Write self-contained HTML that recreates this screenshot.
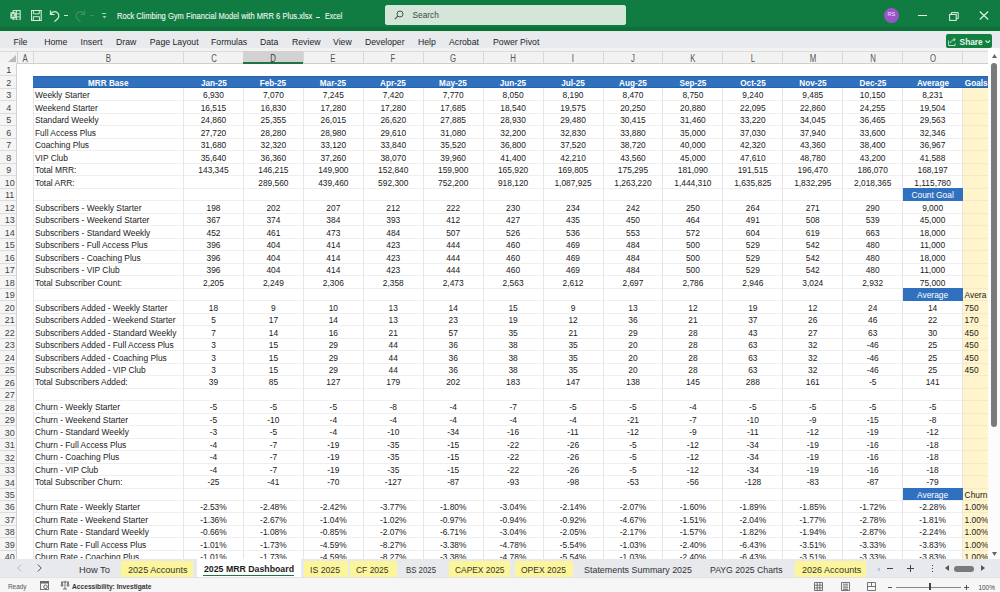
<!DOCTYPE html><html><head><meta charset="utf-8"><style>
*{margin:0;padding:0;box-sizing:border-box}
html,body{width:1000px;height:592px;overflow:hidden;background:#fff;font-family:"Liberation Sans", sans-serif;}
.a{position:absolute}
.t{position:absolute;white-space:nowrap;line-height:1}
.c{position:absolute;white-space:nowrap;font-size:8.4px;color:#1a1a1a;line-height:10px;height:10px;text-align:center}
.l{position:absolute;white-space:nowrap;font-size:8.4px;color:#1a1a1a;line-height:10px;height:10px;text-align:left}
.hd{position:absolute;white-space:nowrap;font-size:8.8px;color:#fff;font-weight:bold;line-height:10px;height:10px;text-align:center;transform:scaleX(0.93)}
.rn{position:absolute;left:1.2px;width:17px;text-align:center;font-size:9px;color:#444;line-height:10px;height:10px}
.ch{position:absolute;top:51.6px;height:13px;text-align:center;font-size:10px;color:#555;line-height:13px;transform:scaleX(0.78)}
</style></head><body>
<div class="a" style="left:0;top:0;width:1000px;height:31px;background:#117c41"></div>
<div class="a" style="left:0;top:27.2px;width:1000px;height:3.6px;background:#0f6f3a"></div>
<div class="a" style="left:0;top:31px;width:1000px;height:1.2px;background:#dcefe3"></div>
<svg class="a" style="left:10.2px;top:9.7px" width="10.8" height="10.8" viewBox="0 0 12 12"><rect x="3.5" y="0.7" width="7.8" height="10.6" fill="none" stroke="#d9f0df" stroke-width="1.2"/><path d="M7.3 1v10M3.5 4.3h7.8M3.5 7.7h7.8" stroke="#d9f0df" stroke-width="1"/><rect x="0.5" y="2.5" width="6" height="7" fill="#d9f0df"/><path d="M2 4l3 4M5 4l-3 4" stroke="#1d7b43" stroke-width="1"/></svg>
<svg class="a" style="left:30.8px;top:9.7px" width="10.8" height="11.1" viewBox="0 0 11 12" preserveAspectRatio="none"><path d="M0.6 0.6h9.8v10.8h-9.8z" fill="none" stroke="#d9f0df" stroke-width="1.1"/><path d="M2.6 0.6v3.6h5.8v-3.6M2.4 11.4v-4.2h6.2v4.2" fill="none" stroke="#d9f0df" stroke-width="1"/></svg>
<svg class="a" style="left:49px;top:9px" width="12" height="13" viewBox="0 0 12 13"><path d="M1.5 1.5v4h4" fill="none" stroke="#d9f0df" stroke-width="1.2"/><path d="M1.8 5.3C3 2.8 5.6 2 7.8 3.2c2.6 1.5 2.6 5 0.6 6.8l-3 2.6" fill="none" stroke="#d9f0df" stroke-width="1.2"/></svg>
<div class="a" style="left:64px;top:14.6px;width:4px;height:1px;background:#cfe7d5"></div>
<svg class="a" style="left:74px;top:9px" width="12" height="13" viewBox="0 0 12 13"><path d="M10.5 1.5v4h-4" fill="none" stroke="#3f9062" stroke-width="1.2"/><path d="M10.2 5.3C9 2.8 6.4 2 4.2 3.2c-2.6 1.5-2.6 5-0.6 6.8l3 2.6" fill="none" stroke="#3f9062" stroke-width="1.2"/></svg>
<div class="a" style="left:89.5px;top:14.6px;width:4px;height:1px;background:#3f9062"></div>
<div class="a" style="left:102px;top:13.2px;width:4px;height:0.9px;background:#9fcfb2"></div>
<svg class="a" style="left:101.5px;top:15.5px" width="5" height="3" viewBox="0 0 5 3"><path d="M0.5 0h4l-2 2.5z" fill="#9fcfb2"/></svg>
<div class="t" style="left:117px;top:13px;font-size:8.2px;color:#eef7f1;-webkit-text-stroke:0.1px #eef7f1;transform:scaleX(0.925);transform-origin:0 0">Rock Climbing Gym Financial Model with MRR 6 Plus.xlsx</div>
<div class="a" style="left:316.4px;top:17px;width:3.6px;height:0.9px;background:#dcefe3"></div>
<div class="t" style="left:324.5px;top:13px;font-size:8.2px;color:#eef7f1;-webkit-text-stroke:0.1px #eef7f1;transform:scaleX(0.87);transform-origin:0 0">Excel</div>
<div class="a" style="left:385.2px;top:5.3px;width:240.4px;height:20px;background:#d5e5da;border:0.8px solid #c9ecd5;border-radius:2px"></div>
<svg class="a" style="left:394.3px;top:9.9px" width="10" height="10" viewBox="0 0 10 10"><circle cx="6" cy="4" r="3" fill="none" stroke="#3b5a45" stroke-width="1"/><path d="M3.8 6.2L0.8 9.2" stroke="#3b5a45" stroke-width="1.1"/></svg>
<div class="t" style="left:412.5px;top:11.2px;font-size:8.3px;color:#3b4a40">Search</div>
<div class="a" style="left:883.5px;top:7.8px;width:15.4px;height:15.4px;border-radius:50%;background:#9b55c9"></div>
<div class="t" style="left:886.5px;top:12.3px;font-size:5.5px;color:#f0e0ff;width:9.5px;text-align:center">RS</div>
<div class="a" style="left:918px;top:14.6px;width:8.5px;height:1px;background:#e6f2ea"></div>
<svg class="a" style="left:949px;top:11.5px" width="10" height="9" viewBox="0 0 10 9"><rect x="0.6" y="2.4" width="6.6" height="6" fill="none" stroke="#e6f2ea" stroke-width="1"/><path d="M2.4 2.4V0.6h6.8v6h-2" fill="none" stroke="#e6f2ea" stroke-width="1"/></svg>
<svg class="a" style="left:979px;top:11px" width="10" height="9" viewBox="0 0 10 9"><path d="M0.8 0.5l8.4 8M9.2 0.5l-8.4 8" stroke="#e6f2ea" stroke-width="1.1"/></svg>
<div class="a" style="left:0;top:32.2px;width:1000px;height:15.8px;background:#e8eaee"></div>
<div class="t" style="left:13.4px;top:37.8px;font-size:8.7px;color:#262626">File</div>
<div class="t" style="left:44.2px;top:37.8px;font-size:8.7px;color:#262626">Home</div>
<div class="t" style="left:80.6px;top:37.8px;font-size:8.7px;color:#262626">Insert</div>
<div class="t" style="left:116px;top:37.8px;font-size:8.7px;color:#262626">Draw</div>
<div class="t" style="left:149.8px;top:37.8px;font-size:8.7px;color:#262626">Page Layout</div>
<div class="t" style="left:211px;top:37.8px;font-size:8.7px;color:#262626">Formulas</div>
<div class="t" style="left:260px;top:37.8px;font-size:8.7px;color:#262626">Data</div>
<div class="t" style="left:292px;top:37.8px;font-size:8.7px;color:#262626">Review</div>
<div class="t" style="left:333px;top:37.8px;font-size:8.7px;color:#262626">View</div>
<div class="t" style="left:365px;top:37.8px;font-size:8.7px;color:#262626">Developer</div>
<div class="t" style="left:418px;top:37.8px;font-size:8.7px;color:#262626">Help</div>
<div class="t" style="left:449px;top:37.8px;font-size:8.7px;color:#262626">Acrobat</div>
<div class="t" style="left:493px;top:37.8px;font-size:8.7px;color:#262626">Power Pivot</div>
<div class="a" style="left:946px;top:33.6px;width:46.3px;height:14.7px;background:#12803f;border-radius:2px"></div>
<svg class="a" style="left:947.5px;top:37px" width="9" height="9" viewBox="0 0 9 9"><path d="M0.6 3.5v5h6.5v-2" fill="none" stroke="#cfe9d8" stroke-width="0.9"/><path d="M2.5 6C3 3.5 4.5 2.6 7 2.6M5.5 1l1.8 1.6-1.8 1.6" fill="none" stroke="#cfe9d8" stroke-width="0.9"/></svg>
<div class="t" style="left:959.6px;top:37.7px;font-size:8.3px;color:#e8f5ec;font-weight:bold">Share</div>
<svg class="a" style="left:985px;top:39.8px" width="5.5" height="3.5" viewBox="0 0 5.5 3.5"><path d="M0.5 0.5l2.25 2.4 2.25-2.4" fill="none" stroke="#cfe9d8" stroke-width="1.3"/></svg>
<div class="a" style="left:0;top:48px;width:988px;height:15.650000000000002px;background:#f2f2f2;border-bottom:1px solid #cfcfcf"></div>
<div class="a" style="left:0;top:51px;width:988px;height:1px;background:#dcdcdc"></div>
<svg class="a" style="left:8px;top:54.5px" width="8" height="7" viewBox="0 0 8 7"><path d="M8 0v7h-8z" fill="#b9b9b9"/></svg>
<div class="a" style="left:32.5px;top:52px;width:1px;height:11px;background:#d8d8d8"></div>
<div class="ch" style="left:17px;width:16px;color:#555">A</div>
<div class="a" style="left:183.0px;top:52px;width:1px;height:11px;background:#d8d8d8"></div>
<div class="ch" style="left:33px;width:150.5px;color:#555">B</div>
<div class="a" style="left:242.93px;top:52px;width:1px;height:11px;background:#d8d8d8"></div>
<div class="ch" style="left:183.5px;width:59.93000000000001px;color:#555">C</div>
<div class="a" style="left:243.43px;top:50.6px;width:59.93000000000001px;height:13px;background:#d2d2d2;border-bottom:2px solid #217346"></div>
<div class="a" style="left:302.86px;top:52px;width:1px;height:11px;background:#d8d8d8"></div>
<div class="ch" style="left:243.43px;width:59.93000000000001px;color:#333">D</div>
<div class="a" style="left:362.78999999999996px;top:52px;width:1px;height:11px;background:#d8d8d8"></div>
<div class="ch" style="left:303.36px;width:59.92999999999995px;color:#555">E</div>
<div class="a" style="left:422.72px;top:52px;width:1px;height:11px;background:#d8d8d8"></div>
<div class="ch" style="left:363.28999999999996px;width:59.930000000000064px;color:#555">F</div>
<div class="a" style="left:482.65px;top:52px;width:1px;height:11px;background:#d8d8d8"></div>
<div class="ch" style="left:423.22px;width:59.92999999999995px;color:#555">G</div>
<div class="a" style="left:542.5799999999999px;top:52px;width:1px;height:11px;background:#d8d8d8"></div>
<div class="ch" style="left:483.15px;width:59.92999999999995px;color:#555">H</div>
<div class="a" style="left:602.51px;top:52px;width:1px;height:11px;background:#d8d8d8"></div>
<div class="ch" style="left:543.0799999999999px;width:59.930000000000064px;color:#555">I</div>
<div class="a" style="left:662.44px;top:52px;width:1px;height:11px;background:#d8d8d8"></div>
<div class="ch" style="left:603.01px;width:59.930000000000064px;color:#555">J</div>
<div class="a" style="left:722.37px;top:52px;width:1px;height:11px;background:#d8d8d8"></div>
<div class="ch" style="left:662.94px;width:59.92999999999995px;color:#555">K</div>
<div class="a" style="left:782.3px;top:52px;width:1px;height:11px;background:#d8d8d8"></div>
<div class="ch" style="left:722.87px;width:59.92999999999995px;color:#555">L</div>
<div class="a" style="left:842.23px;top:52px;width:1px;height:11px;background:#d8d8d8"></div>
<div class="ch" style="left:782.8px;width:59.930000000000064px;color:#555">M</div>
<div class="a" style="left:902.16px;top:52px;width:1px;height:11px;background:#d8d8d8"></div>
<div class="ch" style="left:842.73px;width:59.92999999999995px;color:#555">N</div>
<div class="a" style="left:962.09px;top:52px;width:1px;height:11px;background:#d8d8d8"></div>
<div class="ch" style="left:902.66px;width:59.930000000000064px;color:#555">O</div>
<div class="a" style="left:1022.02px;top:52px;width:1px;height:11px;background:#d8d8d8"></div>
<div class="a" style="left:16.5px;top:50.6px;width:1px;height:13px;background:#cfcfcf"></div>
<div class="a" style="left:0;top:63.35px;width:987.5px;height:495.65px;overflow:hidden">
<div class="a" style="left:0;top:0;width:17px;height:600px;background:#f5f5f5;border-right:1px solid #cfcfcf"></div>
<div class="a" style="left:962.59px;top:24.979999999999997px;width:25.409999999999968px;height:600px;background:#fff4cb"></div>
<div class="a" style="left:0;top:11.99px;width:17px;height:1px;background:#dcdcdc"></div>
<div class="a" style="left:0;top:24.48px;width:17px;height:1px;background:#dcdcdc"></div>
<div class="a" style="left:33px;top:36.97px;width:929.59px;height:1px;background:#efefef"></div>
<div class="a" style="left:962.59px;top:36.97px;width:25.409999999999968px;height:1px;background:#f4eacb"></div>
<div class="a" style="left:0;top:36.97px;width:17px;height:1px;background:#dcdcdc"></div>
<div class="a" style="left:33px;top:49.46px;width:929.59px;height:1px;background:#efefef"></div>
<div class="a" style="left:962.59px;top:49.46px;width:25.409999999999968px;height:1px;background:#f4eacb"></div>
<div class="a" style="left:0;top:49.46px;width:17px;height:1px;background:#dcdcdc"></div>
<div class="a" style="left:33px;top:61.95px;width:929.59px;height:1px;background:#efefef"></div>
<div class="a" style="left:962.59px;top:61.95px;width:25.409999999999968px;height:1px;background:#f4eacb"></div>
<div class="a" style="left:0;top:61.95px;width:17px;height:1px;background:#dcdcdc"></div>
<div class="a" style="left:33px;top:74.44px;width:929.59px;height:1px;background:#efefef"></div>
<div class="a" style="left:962.59px;top:74.44px;width:25.409999999999968px;height:1px;background:#f4eacb"></div>
<div class="a" style="left:0;top:74.44px;width:17px;height:1px;background:#dcdcdc"></div>
<div class="a" style="left:33px;top:86.93px;width:929.59px;height:1px;background:#efefef"></div>
<div class="a" style="left:962.59px;top:86.93px;width:25.409999999999968px;height:1px;background:#f4eacb"></div>
<div class="a" style="left:0;top:86.93px;width:17px;height:1px;background:#dcdcdc"></div>
<div class="a" style="left:33px;top:99.42px;width:929.59px;height:1px;background:#efefef"></div>
<div class="a" style="left:962.59px;top:99.42px;width:25.409999999999968px;height:1px;background:#f4eacb"></div>
<div class="a" style="left:0;top:99.42px;width:17px;height:1px;background:#dcdcdc"></div>
<div class="a" style="left:33px;top:111.91px;width:929.59px;height:1px;background:#efefef"></div>
<div class="a" style="left:962.59px;top:111.91px;width:25.409999999999968px;height:1px;background:#f4eacb"></div>
<div class="a" style="left:0;top:111.91px;width:17px;height:1px;background:#dcdcdc"></div>
<div class="a" style="left:33px;top:124.40px;width:929.59px;height:1px;background:#efefef"></div>
<div class="a" style="left:962.59px;top:124.40px;width:25.409999999999968px;height:1px;background:#f4eacb"></div>
<div class="a" style="left:0;top:124.40px;width:17px;height:1px;background:#dcdcdc"></div>
<div class="a" style="left:33px;top:136.89px;width:929.59px;height:1px;background:#efefef"></div>
<div class="a" style="left:962.59px;top:136.89px;width:25.409999999999968px;height:1px;background:#f4eacb"></div>
<div class="a" style="left:0;top:136.89px;width:17px;height:1px;background:#dcdcdc"></div>
<div class="a" style="left:33px;top:149.38px;width:929.59px;height:1px;background:#efefef"></div>
<div class="a" style="left:962.59px;top:149.38px;width:25.409999999999968px;height:1px;background:#f4eacb"></div>
<div class="a" style="left:0;top:149.38px;width:17px;height:1px;background:#dcdcdc"></div>
<div class="a" style="left:33px;top:161.87px;width:929.59px;height:1px;background:#efefef"></div>
<div class="a" style="left:962.59px;top:161.87px;width:25.409999999999968px;height:1px;background:#f4eacb"></div>
<div class="a" style="left:0;top:161.87px;width:17px;height:1px;background:#dcdcdc"></div>
<div class="a" style="left:33px;top:174.36px;width:929.59px;height:1px;background:#efefef"></div>
<div class="a" style="left:962.59px;top:174.36px;width:25.409999999999968px;height:1px;background:#f4eacb"></div>
<div class="a" style="left:0;top:174.36px;width:17px;height:1px;background:#dcdcdc"></div>
<div class="a" style="left:33px;top:186.85px;width:929.59px;height:1px;background:#efefef"></div>
<div class="a" style="left:962.59px;top:186.85px;width:25.409999999999968px;height:1px;background:#f4eacb"></div>
<div class="a" style="left:0;top:186.85px;width:17px;height:1px;background:#dcdcdc"></div>
<div class="a" style="left:33px;top:199.34px;width:929.59px;height:1px;background:#efefef"></div>
<div class="a" style="left:962.59px;top:199.34px;width:25.409999999999968px;height:1px;background:#f4eacb"></div>
<div class="a" style="left:0;top:199.34px;width:17px;height:1px;background:#dcdcdc"></div>
<div class="a" style="left:33px;top:211.83px;width:929.59px;height:1px;background:#efefef"></div>
<div class="a" style="left:962.59px;top:211.83px;width:25.409999999999968px;height:1px;background:#f4eacb"></div>
<div class="a" style="left:0;top:211.83px;width:17px;height:1px;background:#dcdcdc"></div>
<div class="a" style="left:33px;top:224.32px;width:929.59px;height:1px;background:#efefef"></div>
<div class="a" style="left:962.59px;top:224.32px;width:25.409999999999968px;height:1px;background:#f4eacb"></div>
<div class="a" style="left:0;top:224.32px;width:17px;height:1px;background:#dcdcdc"></div>
<div class="a" style="left:33px;top:236.81px;width:929.59px;height:1px;background:#efefef"></div>
<div class="a" style="left:962.59px;top:236.81px;width:25.409999999999968px;height:1px;background:#f4eacb"></div>
<div class="a" style="left:0;top:236.81px;width:17px;height:1px;background:#dcdcdc"></div>
<div class="a" style="left:33px;top:249.30px;width:929.59px;height:1px;background:#efefef"></div>
<div class="a" style="left:962.59px;top:249.30px;width:25.409999999999968px;height:1px;background:#f4eacb"></div>
<div class="a" style="left:0;top:249.30px;width:17px;height:1px;background:#dcdcdc"></div>
<div class="a" style="left:33px;top:261.79px;width:929.59px;height:1px;background:#efefef"></div>
<div class="a" style="left:962.59px;top:261.79px;width:25.409999999999968px;height:1px;background:#f4eacb"></div>
<div class="a" style="left:0;top:261.79px;width:17px;height:1px;background:#dcdcdc"></div>
<div class="a" style="left:33px;top:274.28px;width:929.59px;height:1px;background:#efefef"></div>
<div class="a" style="left:962.59px;top:274.28px;width:25.409999999999968px;height:1px;background:#f4eacb"></div>
<div class="a" style="left:0;top:274.28px;width:17px;height:1px;background:#dcdcdc"></div>
<div class="a" style="left:33px;top:286.77px;width:929.59px;height:1px;background:#efefef"></div>
<div class="a" style="left:962.59px;top:286.77px;width:25.409999999999968px;height:1px;background:#f4eacb"></div>
<div class="a" style="left:0;top:286.77px;width:17px;height:1px;background:#dcdcdc"></div>
<div class="a" style="left:33px;top:299.26px;width:929.59px;height:1px;background:#efefef"></div>
<div class="a" style="left:962.59px;top:299.26px;width:25.409999999999968px;height:1px;background:#f4eacb"></div>
<div class="a" style="left:0;top:299.26px;width:17px;height:1px;background:#dcdcdc"></div>
<div class="a" style="left:33px;top:311.75px;width:929.59px;height:1px;background:#efefef"></div>
<div class="a" style="left:962.59px;top:311.75px;width:25.409999999999968px;height:1px;background:#f4eacb"></div>
<div class="a" style="left:0;top:311.75px;width:17px;height:1px;background:#dcdcdc"></div>
<div class="a" style="left:33px;top:324.24px;width:929.59px;height:1px;background:#efefef"></div>
<div class="a" style="left:962.59px;top:324.24px;width:25.409999999999968px;height:1px;background:#f4eacb"></div>
<div class="a" style="left:0;top:324.24px;width:17px;height:1px;background:#dcdcdc"></div>
<div class="a" style="left:33px;top:336.73px;width:929.59px;height:1px;background:#efefef"></div>
<div class="a" style="left:962.59px;top:336.73px;width:25.409999999999968px;height:1px;background:#f4eacb"></div>
<div class="a" style="left:0;top:336.73px;width:17px;height:1px;background:#dcdcdc"></div>
<div class="a" style="left:33px;top:349.22px;width:929.59px;height:1px;background:#efefef"></div>
<div class="a" style="left:962.59px;top:349.22px;width:25.409999999999968px;height:1px;background:#f4eacb"></div>
<div class="a" style="left:0;top:349.22px;width:17px;height:1px;background:#dcdcdc"></div>
<div class="a" style="left:33px;top:361.71px;width:929.59px;height:1px;background:#efefef"></div>
<div class="a" style="left:962.59px;top:361.71px;width:25.409999999999968px;height:1px;background:#f4eacb"></div>
<div class="a" style="left:0;top:361.71px;width:17px;height:1px;background:#dcdcdc"></div>
<div class="a" style="left:33px;top:374.20px;width:929.59px;height:1px;background:#efefef"></div>
<div class="a" style="left:962.59px;top:374.20px;width:25.409999999999968px;height:1px;background:#f4eacb"></div>
<div class="a" style="left:0;top:374.20px;width:17px;height:1px;background:#dcdcdc"></div>
<div class="a" style="left:33px;top:386.69px;width:929.59px;height:1px;background:#efefef"></div>
<div class="a" style="left:962.59px;top:386.69px;width:25.409999999999968px;height:1px;background:#f4eacb"></div>
<div class="a" style="left:0;top:386.69px;width:17px;height:1px;background:#dcdcdc"></div>
<div class="a" style="left:33px;top:399.18px;width:929.59px;height:1px;background:#efefef"></div>
<div class="a" style="left:962.59px;top:399.18px;width:25.409999999999968px;height:1px;background:#f4eacb"></div>
<div class="a" style="left:0;top:399.18px;width:17px;height:1px;background:#dcdcdc"></div>
<div class="a" style="left:33px;top:411.67px;width:929.59px;height:1px;background:#efefef"></div>
<div class="a" style="left:962.59px;top:411.67px;width:25.409999999999968px;height:1px;background:#f4eacb"></div>
<div class="a" style="left:0;top:411.67px;width:17px;height:1px;background:#dcdcdc"></div>
<div class="a" style="left:33px;top:424.16px;width:929.59px;height:1px;background:#efefef"></div>
<div class="a" style="left:962.59px;top:424.16px;width:25.409999999999968px;height:1px;background:#f4eacb"></div>
<div class="a" style="left:0;top:424.16px;width:17px;height:1px;background:#dcdcdc"></div>
<div class="a" style="left:33px;top:436.65px;width:929.59px;height:1px;background:#efefef"></div>
<div class="a" style="left:962.59px;top:436.65px;width:25.409999999999968px;height:1px;background:#f4eacb"></div>
<div class="a" style="left:0;top:436.65px;width:17px;height:1px;background:#dcdcdc"></div>
<div class="a" style="left:33px;top:449.14px;width:929.59px;height:1px;background:#efefef"></div>
<div class="a" style="left:962.59px;top:449.14px;width:25.409999999999968px;height:1px;background:#f4eacb"></div>
<div class="a" style="left:0;top:449.14px;width:17px;height:1px;background:#dcdcdc"></div>
<div class="a" style="left:33px;top:461.63px;width:929.59px;height:1px;background:#efefef"></div>
<div class="a" style="left:962.59px;top:461.63px;width:25.409999999999968px;height:1px;background:#f4eacb"></div>
<div class="a" style="left:0;top:461.63px;width:17px;height:1px;background:#dcdcdc"></div>
<div class="a" style="left:33px;top:474.12px;width:929.59px;height:1px;background:#efefef"></div>
<div class="a" style="left:962.59px;top:474.12px;width:25.409999999999968px;height:1px;background:#f4eacb"></div>
<div class="a" style="left:0;top:474.12px;width:17px;height:1px;background:#dcdcdc"></div>
<div class="a" style="left:33px;top:486.61px;width:929.59px;height:1px;background:#efefef"></div>
<div class="a" style="left:962.59px;top:486.61px;width:25.409999999999968px;height:1px;background:#f4eacb"></div>
<div class="a" style="left:0;top:486.61px;width:17px;height:1px;background:#dcdcdc"></div>
<div class="a" style="left:33px;top:499.10px;width:929.59px;height:1px;background:#efefef"></div>
<div class="a" style="left:962.59px;top:499.10px;width:25.409999999999968px;height:1px;background:#f4eacb"></div>
<div class="a" style="left:0;top:499.10px;width:17px;height:1px;background:#dcdcdc"></div>
<div class="a" style="left:33px;top:511.59px;width:929.59px;height:1px;background:#efefef"></div>
<div class="a" style="left:962.59px;top:511.59px;width:25.409999999999968px;height:1px;background:#f4eacb"></div>
<div class="a" style="left:0;top:511.59px;width:17px;height:1px;background:#dcdcdc"></div>
<div class="a" style="left:32.50px;top:24.979999999999997px;width:1px;height:600px;background:#e6e6e6"></div>
<div class="a" style="left:183.00px;top:24.979999999999997px;width:1px;height:600px;background:#e6e6e6"></div>
<div class="a" style="left:242.93px;top:24.979999999999997px;width:1px;height:600px;background:#e6e6e6"></div>
<div class="a" style="left:302.86px;top:24.979999999999997px;width:1px;height:600px;background:#e6e6e6"></div>
<div class="a" style="left:362.79px;top:24.979999999999997px;width:1px;height:600px;background:#e6e6e6"></div>
<div class="a" style="left:422.72px;top:24.979999999999997px;width:1px;height:600px;background:#e6e6e6"></div>
<div class="a" style="left:482.65px;top:24.979999999999997px;width:1px;height:600px;background:#e6e6e6"></div>
<div class="a" style="left:542.58px;top:24.979999999999997px;width:1px;height:600px;background:#e6e6e6"></div>
<div class="a" style="left:602.51px;top:24.979999999999997px;width:1px;height:600px;background:#e6e6e6"></div>
<div class="a" style="left:662.44px;top:24.979999999999997px;width:1px;height:600px;background:#e6e6e6"></div>
<div class="a" style="left:722.37px;top:24.979999999999997px;width:1px;height:600px;background:#e6e6e6"></div>
<div class="a" style="left:782.30px;top:24.979999999999997px;width:1px;height:600px;background:#e6e6e6"></div>
<div class="a" style="left:842.23px;top:24.979999999999997px;width:1px;height:600px;background:#e6e6e6"></div>
<div class="a" style="left:902.16px;top:24.979999999999997px;width:1px;height:600px;background:#e6e6e6"></div>
<div class="a" style="left:962.09px;top:24.979999999999997px;width:1px;height:600px;background:#e6e6e6"></div>
<div class="rn" style="top:2.00px;left:0.2px">1</div>
<div class="rn" style="top:14.49px;left:0.2px">2</div>
<div class="rn" style="top:26.98px;left:0.2px">3</div>
<div class="rn" style="top:39.47px;left:0.2px">4</div>
<div class="rn" style="top:51.96px;left:0.2px">5</div>
<div class="rn" style="top:64.45px;left:0.2px">6</div>
<div class="rn" style="top:76.94px;left:0.2px">7</div>
<div class="rn" style="top:89.43px;left:0.2px">8</div>
<div class="rn" style="top:101.92px;left:0.2px">9</div>
<div class="rn" style="top:114.41px;">10</div>
<div class="rn" style="top:126.90px;">11</div>
<div class="rn" style="top:139.39px;">12</div>
<div class="rn" style="top:151.88px;">13</div>
<div class="rn" style="top:164.37px;">14</div>
<div class="rn" style="top:176.86px;">15</div>
<div class="rn" style="top:189.35px;">16</div>
<div class="rn" style="top:201.84px;">17</div>
<div class="rn" style="top:214.33px;">18</div>
<div class="rn" style="top:226.82px;">19</div>
<div class="rn" style="top:239.31px;">20</div>
<div class="rn" style="top:251.80px;">21</div>
<div class="rn" style="top:264.29px;">22</div>
<div class="rn" style="top:276.78px;">23</div>
<div class="rn" style="top:289.27px;">24</div>
<div class="rn" style="top:301.76px;">25</div>
<div class="rn" style="top:314.25px;">26</div>
<div class="rn" style="top:326.74px;">27</div>
<div class="rn" style="top:339.23px;">28</div>
<div class="rn" style="top:351.72px;">29</div>
<div class="rn" style="top:364.21px;">30</div>
<div class="rn" style="top:376.70px;">31</div>
<div class="rn" style="top:389.19px;">32</div>
<div class="rn" style="top:401.68px;">33</div>
<div class="rn" style="top:414.17px;">34</div>
<div class="rn" style="top:426.66px;">35</div>
<div class="rn" style="top:439.15px;">36</div>
<div class="rn" style="top:451.64px;">37</div>
<div class="rn" style="top:464.13px;">38</div>
<div class="rn" style="top:476.62px;">39</div>
<div class="rn" style="top:489.11px;">40</div>
<div class="a" style="left:33px;top:12.490000000000002px;width:955px;height:12.49px;background:#2f70bf;border-top:1px solid #2a62a8;border-bottom:1px solid #2a62a8"></div>
<div class="hd" style="left:33px;width:150.5px;top:14.49px">MRR Base</div>
<div class="hd" style="left:183.5px;width:59.93px;top:14.49px">Jan-25</div>
<div class="hd" style="left:243.43px;width:59.93px;top:14.49px">Feb-25</div>
<div class="hd" style="left:303.36px;width:59.93px;top:14.49px">Mar-25</div>
<div class="hd" style="left:363.28999999999996px;width:59.93px;top:14.49px">Apr-25</div>
<div class="hd" style="left:423.22px;width:59.93px;top:14.49px">May-25</div>
<div class="hd" style="left:483.15px;width:59.93px;top:14.49px">Jun-25</div>
<div class="hd" style="left:543.0799999999999px;width:59.93px;top:14.49px">Jul-25</div>
<div class="hd" style="left:603.01px;width:59.93px;top:14.49px">Aug-25</div>
<div class="hd" style="left:662.94px;width:59.93px;top:14.49px">Sep-25</div>
<div class="hd" style="left:722.87px;width:59.93px;top:14.49px">Oct-25</div>
<div class="hd" style="left:782.8px;width:59.93px;top:14.49px">Nov-25</div>
<div class="hd" style="left:842.73px;width:59.93px;top:14.49px">Dec-25</div>
<div class="hd" style="left:902.66px;width:59.93px;top:14.49px">Average</div>
<div class="hd" style="left:962.59px;width:60px;top:14.49px;text-align:left;padding-left:2px;transform-origin:0 0">Goals</div>
<div class="a" style="left:902.66px;top:124.9px;width:59.93px;height:12.49px;background:#2f70bf"></div>
<div class="c" style="left:902.66px;width:59.93px;top:126.80px;color:#fff">Count Goal</div>
<div class="a" style="left:902.66px;top:224.82000000000002px;width:59.93px;height:12.49px;background:#2f70bf"></div>
<div class="c" style="left:902.66px;width:59.93px;top:226.72px;color:#fff">Average</div>
<div class="l" style="left:964.59px;top:226.72px">Avera</div>
<div class="a" style="left:902.66px;top:424.66px;width:59.93px;height:12.49px;background:#2f70bf"></div>
<div class="c" style="left:902.66px;width:59.93px;top:426.56px;color:#fff">Average</div>
<div class="l" style="left:964.59px;top:426.56px">Churn</div>
<div class="l" style="left:35px;top:26.88px">Weekly Starter</div>
<div class="c" style="left:183.5px;width:59.93px;top:26.88px">6,930</div>
<div class="c" style="left:243.43px;width:59.93px;top:26.88px">7,070</div>
<div class="c" style="left:303.36px;width:59.93px;top:26.88px">7,245</div>
<div class="c" style="left:363.28999999999996px;width:59.93px;top:26.88px">7,420</div>
<div class="c" style="left:423.22px;width:59.93px;top:26.88px">7,770</div>
<div class="c" style="left:483.15px;width:59.93px;top:26.88px">8,050</div>
<div class="c" style="left:543.0799999999999px;width:59.93px;top:26.88px">8,190</div>
<div class="c" style="left:603.01px;width:59.93px;top:26.88px">8,470</div>
<div class="c" style="left:662.94px;width:59.93px;top:26.88px">8,750</div>
<div class="c" style="left:722.87px;width:59.93px;top:26.88px">9,240</div>
<div class="c" style="left:782.8px;width:59.93px;top:26.88px">9,485</div>
<div class="c" style="left:842.73px;width:59.93px;top:26.88px">10,150</div>
<div class="c" style="left:902.66px;width:59.93px;top:26.88px">8,231</div>
<div class="l" style="left:35px;top:39.37px">Weekend Starter</div>
<div class="c" style="left:183.5px;width:59.93px;top:39.37px">16,515</div>
<div class="c" style="left:243.43px;width:59.93px;top:39.37px">16,830</div>
<div class="c" style="left:303.36px;width:59.93px;top:39.37px">17,280</div>
<div class="c" style="left:363.28999999999996px;width:59.93px;top:39.37px">17,280</div>
<div class="c" style="left:423.22px;width:59.93px;top:39.37px">17,685</div>
<div class="c" style="left:483.15px;width:59.93px;top:39.37px">18,540</div>
<div class="c" style="left:543.0799999999999px;width:59.93px;top:39.37px">19,575</div>
<div class="c" style="left:603.01px;width:59.93px;top:39.37px">20,250</div>
<div class="c" style="left:662.94px;width:59.93px;top:39.37px">20,880</div>
<div class="c" style="left:722.87px;width:59.93px;top:39.37px">22,095</div>
<div class="c" style="left:782.8px;width:59.93px;top:39.37px">22,860</div>
<div class="c" style="left:842.73px;width:59.93px;top:39.37px">24,255</div>
<div class="c" style="left:902.66px;width:59.93px;top:39.37px">19,504</div>
<div class="l" style="left:35px;top:51.86px">Standard Weekly</div>
<div class="c" style="left:183.5px;width:59.93px;top:51.86px">24,860</div>
<div class="c" style="left:243.43px;width:59.93px;top:51.86px">25,355</div>
<div class="c" style="left:303.36px;width:59.93px;top:51.86px">26,015</div>
<div class="c" style="left:363.28999999999996px;width:59.93px;top:51.86px">26,620</div>
<div class="c" style="left:423.22px;width:59.93px;top:51.86px">27,885</div>
<div class="c" style="left:483.15px;width:59.93px;top:51.86px">28,930</div>
<div class="c" style="left:543.0799999999999px;width:59.93px;top:51.86px">29,480</div>
<div class="c" style="left:603.01px;width:59.93px;top:51.86px">30,415</div>
<div class="c" style="left:662.94px;width:59.93px;top:51.86px">31,460</div>
<div class="c" style="left:722.87px;width:59.93px;top:51.86px">33,220</div>
<div class="c" style="left:782.8px;width:59.93px;top:51.86px">34,045</div>
<div class="c" style="left:842.73px;width:59.93px;top:51.86px">36,465</div>
<div class="c" style="left:902.66px;width:59.93px;top:51.86px">29,563</div>
<div class="l" style="left:35px;top:64.35px">Full Access Plus</div>
<div class="c" style="left:183.5px;width:59.93px;top:64.35px">27,720</div>
<div class="c" style="left:243.43px;width:59.93px;top:64.35px">28,280</div>
<div class="c" style="left:303.36px;width:59.93px;top:64.35px">28,980</div>
<div class="c" style="left:363.28999999999996px;width:59.93px;top:64.35px">29,610</div>
<div class="c" style="left:423.22px;width:59.93px;top:64.35px">31,080</div>
<div class="c" style="left:483.15px;width:59.93px;top:64.35px">32,200</div>
<div class="c" style="left:543.0799999999999px;width:59.93px;top:64.35px">32,830</div>
<div class="c" style="left:603.01px;width:59.93px;top:64.35px">33,880</div>
<div class="c" style="left:662.94px;width:59.93px;top:64.35px">35,000</div>
<div class="c" style="left:722.87px;width:59.93px;top:64.35px">37,030</div>
<div class="c" style="left:782.8px;width:59.93px;top:64.35px">37,940</div>
<div class="c" style="left:842.73px;width:59.93px;top:64.35px">33,600</div>
<div class="c" style="left:902.66px;width:59.93px;top:64.35px">32,346</div>
<div class="l" style="left:35px;top:76.84px">Coaching Plus</div>
<div class="c" style="left:183.5px;width:59.93px;top:76.84px">31,680</div>
<div class="c" style="left:243.43px;width:59.93px;top:76.84px">32,320</div>
<div class="c" style="left:303.36px;width:59.93px;top:76.84px">33,120</div>
<div class="c" style="left:363.28999999999996px;width:59.93px;top:76.84px">33,840</div>
<div class="c" style="left:423.22px;width:59.93px;top:76.84px">35,520</div>
<div class="c" style="left:483.15px;width:59.93px;top:76.84px">36,800</div>
<div class="c" style="left:543.0799999999999px;width:59.93px;top:76.84px">37,520</div>
<div class="c" style="left:603.01px;width:59.93px;top:76.84px">38,720</div>
<div class="c" style="left:662.94px;width:59.93px;top:76.84px">40,000</div>
<div class="c" style="left:722.87px;width:59.93px;top:76.84px">42,320</div>
<div class="c" style="left:782.8px;width:59.93px;top:76.84px">43,360</div>
<div class="c" style="left:842.73px;width:59.93px;top:76.84px">38,400</div>
<div class="c" style="left:902.66px;width:59.93px;top:76.84px">36,967</div>
<div class="l" style="left:35px;top:89.33px">VIP Club</div>
<div class="c" style="left:183.5px;width:59.93px;top:89.33px">35,640</div>
<div class="c" style="left:243.43px;width:59.93px;top:89.33px">36,360</div>
<div class="c" style="left:303.36px;width:59.93px;top:89.33px">37,260</div>
<div class="c" style="left:363.28999999999996px;width:59.93px;top:89.33px">38,070</div>
<div class="c" style="left:423.22px;width:59.93px;top:89.33px">39,960</div>
<div class="c" style="left:483.15px;width:59.93px;top:89.33px">41,400</div>
<div class="c" style="left:543.0799999999999px;width:59.93px;top:89.33px">42,210</div>
<div class="c" style="left:603.01px;width:59.93px;top:89.33px">43,560</div>
<div class="c" style="left:662.94px;width:59.93px;top:89.33px">45,000</div>
<div class="c" style="left:722.87px;width:59.93px;top:89.33px">47,610</div>
<div class="c" style="left:782.8px;width:59.93px;top:89.33px">48,780</div>
<div class="c" style="left:842.73px;width:59.93px;top:89.33px">43,200</div>
<div class="c" style="left:902.66px;width:59.93px;top:89.33px">41,588</div>
<div class="l" style="left:35px;top:101.82px">Total MRR:</div>
<div class="c" style="left:183.5px;width:59.93px;top:101.82px">143,345</div>
<div class="c" style="left:243.43px;width:59.93px;top:101.82px">146,215</div>
<div class="c" style="left:303.36px;width:59.93px;top:101.82px">149,900</div>
<div class="c" style="left:363.28999999999996px;width:59.93px;top:101.82px">152,840</div>
<div class="c" style="left:423.22px;width:59.93px;top:101.82px">159,900</div>
<div class="c" style="left:483.15px;width:59.93px;top:101.82px">165,920</div>
<div class="c" style="left:543.0799999999999px;width:59.93px;top:101.82px">169,805</div>
<div class="c" style="left:603.01px;width:59.93px;top:101.82px">175,295</div>
<div class="c" style="left:662.94px;width:59.93px;top:101.82px">181,090</div>
<div class="c" style="left:722.87px;width:59.93px;top:101.82px">191,515</div>
<div class="c" style="left:782.8px;width:59.93px;top:101.82px">196,470</div>
<div class="c" style="left:842.73px;width:59.93px;top:101.82px">186,070</div>
<div class="c" style="left:902.66px;width:59.93px;top:101.82px">168,197</div>
<div class="l" style="left:35px;top:114.31px">Total ARR:</div>
<div class="c" style="left:243.43px;width:59.93px;top:114.31px">289,560</div>
<div class="c" style="left:303.36px;width:59.93px;top:114.31px">439,460</div>
<div class="c" style="left:363.28999999999996px;width:59.93px;top:114.31px">592,300</div>
<div class="c" style="left:423.22px;width:59.93px;top:114.31px">752,200</div>
<div class="c" style="left:483.15px;width:59.93px;top:114.31px">918,120</div>
<div class="c" style="left:543.0799999999999px;width:59.93px;top:114.31px">1,087,925</div>
<div class="c" style="left:603.01px;width:59.93px;top:114.31px">1,263,220</div>
<div class="c" style="left:662.94px;width:59.93px;top:114.31px">1,444,310</div>
<div class="c" style="left:722.87px;width:59.93px;top:114.31px">1,635,825</div>
<div class="c" style="left:782.8px;width:59.93px;top:114.31px">1,832,295</div>
<div class="c" style="left:842.73px;width:59.93px;top:114.31px">2,018,365</div>
<div class="c" style="left:902.66px;width:59.93px;top:114.31px">1,115,780</div>
<div class="l" style="left:35px;top:139.29px">Subscribers - Weekly Starter</div>
<div class="c" style="left:183.5px;width:59.93px;top:139.29px">198</div>
<div class="c" style="left:243.43px;width:59.93px;top:139.29px">202</div>
<div class="c" style="left:303.36px;width:59.93px;top:139.29px">207</div>
<div class="c" style="left:363.28999999999996px;width:59.93px;top:139.29px">212</div>
<div class="c" style="left:423.22px;width:59.93px;top:139.29px">222</div>
<div class="c" style="left:483.15px;width:59.93px;top:139.29px">230</div>
<div class="c" style="left:543.0799999999999px;width:59.93px;top:139.29px">234</div>
<div class="c" style="left:603.01px;width:59.93px;top:139.29px">242</div>
<div class="c" style="left:662.94px;width:59.93px;top:139.29px">250</div>
<div class="c" style="left:722.87px;width:59.93px;top:139.29px">264</div>
<div class="c" style="left:782.8px;width:59.93px;top:139.29px">271</div>
<div class="c" style="left:842.73px;width:59.93px;top:139.29px">290</div>
<div class="c" style="left:902.66px;width:59.93px;top:139.29px">9,000</div>
<div class="l" style="left:35px;top:151.78px">Subscribers - Weekend Starter</div>
<div class="c" style="left:183.5px;width:59.93px;top:151.78px">367</div>
<div class="c" style="left:243.43px;width:59.93px;top:151.78px">374</div>
<div class="c" style="left:303.36px;width:59.93px;top:151.78px">384</div>
<div class="c" style="left:363.28999999999996px;width:59.93px;top:151.78px">393</div>
<div class="c" style="left:423.22px;width:59.93px;top:151.78px">412</div>
<div class="c" style="left:483.15px;width:59.93px;top:151.78px">427</div>
<div class="c" style="left:543.0799999999999px;width:59.93px;top:151.78px">435</div>
<div class="c" style="left:603.01px;width:59.93px;top:151.78px">450</div>
<div class="c" style="left:662.94px;width:59.93px;top:151.78px">464</div>
<div class="c" style="left:722.87px;width:59.93px;top:151.78px">491</div>
<div class="c" style="left:782.8px;width:59.93px;top:151.78px">508</div>
<div class="c" style="left:842.73px;width:59.93px;top:151.78px">539</div>
<div class="c" style="left:902.66px;width:59.93px;top:151.78px">45,000</div>
<div class="l" style="left:35px;top:164.27px">Subscribers - Standard Weekly</div>
<div class="c" style="left:183.5px;width:59.93px;top:164.27px">452</div>
<div class="c" style="left:243.43px;width:59.93px;top:164.27px">461</div>
<div class="c" style="left:303.36px;width:59.93px;top:164.27px">473</div>
<div class="c" style="left:363.28999999999996px;width:59.93px;top:164.27px">484</div>
<div class="c" style="left:423.22px;width:59.93px;top:164.27px">507</div>
<div class="c" style="left:483.15px;width:59.93px;top:164.27px">526</div>
<div class="c" style="left:543.0799999999999px;width:59.93px;top:164.27px">536</div>
<div class="c" style="left:603.01px;width:59.93px;top:164.27px">553</div>
<div class="c" style="left:662.94px;width:59.93px;top:164.27px">572</div>
<div class="c" style="left:722.87px;width:59.93px;top:164.27px">604</div>
<div class="c" style="left:782.8px;width:59.93px;top:164.27px">619</div>
<div class="c" style="left:842.73px;width:59.93px;top:164.27px">663</div>
<div class="c" style="left:902.66px;width:59.93px;top:164.27px">18,000</div>
<div class="l" style="left:35px;top:176.76px">Subscribers - Full Access Plus</div>
<div class="c" style="left:183.5px;width:59.93px;top:176.76px">396</div>
<div class="c" style="left:243.43px;width:59.93px;top:176.76px">404</div>
<div class="c" style="left:303.36px;width:59.93px;top:176.76px">414</div>
<div class="c" style="left:363.28999999999996px;width:59.93px;top:176.76px">423</div>
<div class="c" style="left:423.22px;width:59.93px;top:176.76px">444</div>
<div class="c" style="left:483.15px;width:59.93px;top:176.76px">460</div>
<div class="c" style="left:543.0799999999999px;width:59.93px;top:176.76px">469</div>
<div class="c" style="left:603.01px;width:59.93px;top:176.76px">484</div>
<div class="c" style="left:662.94px;width:59.93px;top:176.76px">500</div>
<div class="c" style="left:722.87px;width:59.93px;top:176.76px">529</div>
<div class="c" style="left:782.8px;width:59.93px;top:176.76px">542</div>
<div class="c" style="left:842.73px;width:59.93px;top:176.76px">480</div>
<div class="c" style="left:902.66px;width:59.93px;top:176.76px">11,000</div>
<div class="l" style="left:35px;top:189.25px">Subscribers - Coaching Plus</div>
<div class="c" style="left:183.5px;width:59.93px;top:189.25px">396</div>
<div class="c" style="left:243.43px;width:59.93px;top:189.25px">404</div>
<div class="c" style="left:303.36px;width:59.93px;top:189.25px">414</div>
<div class="c" style="left:363.28999999999996px;width:59.93px;top:189.25px">423</div>
<div class="c" style="left:423.22px;width:59.93px;top:189.25px">444</div>
<div class="c" style="left:483.15px;width:59.93px;top:189.25px">460</div>
<div class="c" style="left:543.0799999999999px;width:59.93px;top:189.25px">469</div>
<div class="c" style="left:603.01px;width:59.93px;top:189.25px">484</div>
<div class="c" style="left:662.94px;width:59.93px;top:189.25px">500</div>
<div class="c" style="left:722.87px;width:59.93px;top:189.25px">529</div>
<div class="c" style="left:782.8px;width:59.93px;top:189.25px">542</div>
<div class="c" style="left:842.73px;width:59.93px;top:189.25px">480</div>
<div class="c" style="left:902.66px;width:59.93px;top:189.25px">18,000</div>
<div class="l" style="left:35px;top:201.74px">Subscribers - VIP Club</div>
<div class="c" style="left:183.5px;width:59.93px;top:201.74px">396</div>
<div class="c" style="left:243.43px;width:59.93px;top:201.74px">404</div>
<div class="c" style="left:303.36px;width:59.93px;top:201.74px">414</div>
<div class="c" style="left:363.28999999999996px;width:59.93px;top:201.74px">423</div>
<div class="c" style="left:423.22px;width:59.93px;top:201.74px">444</div>
<div class="c" style="left:483.15px;width:59.93px;top:201.74px">460</div>
<div class="c" style="left:543.0799999999999px;width:59.93px;top:201.74px">469</div>
<div class="c" style="left:603.01px;width:59.93px;top:201.74px">484</div>
<div class="c" style="left:662.94px;width:59.93px;top:201.74px">500</div>
<div class="c" style="left:722.87px;width:59.93px;top:201.74px">529</div>
<div class="c" style="left:782.8px;width:59.93px;top:201.74px">542</div>
<div class="c" style="left:842.73px;width:59.93px;top:201.74px">480</div>
<div class="c" style="left:902.66px;width:59.93px;top:201.74px">11,000</div>
<div class="l" style="left:35px;top:214.23px">Total Subscriber Count:</div>
<div class="c" style="left:183.5px;width:59.93px;top:214.23px">2,205</div>
<div class="c" style="left:243.43px;width:59.93px;top:214.23px">2,249</div>
<div class="c" style="left:303.36px;width:59.93px;top:214.23px">2,306</div>
<div class="c" style="left:363.28999999999996px;width:59.93px;top:214.23px">2,358</div>
<div class="c" style="left:423.22px;width:59.93px;top:214.23px">2,473</div>
<div class="c" style="left:483.15px;width:59.93px;top:214.23px">2,563</div>
<div class="c" style="left:543.0799999999999px;width:59.93px;top:214.23px">2,612</div>
<div class="c" style="left:603.01px;width:59.93px;top:214.23px">2,697</div>
<div class="c" style="left:662.94px;width:59.93px;top:214.23px">2,786</div>
<div class="c" style="left:722.87px;width:59.93px;top:214.23px">2,946</div>
<div class="c" style="left:782.8px;width:59.93px;top:214.23px">3,024</div>
<div class="c" style="left:842.73px;width:59.93px;top:214.23px">2,932</div>
<div class="c" style="left:902.66px;width:59.93px;top:214.23px">75,000</div>
<div class="l" style="left:35px;top:239.21px">Subscribers Added - Weekly Starter</div>
<div class="c" style="left:183.5px;width:59.93px;top:239.21px">18</div>
<div class="c" style="left:243.43px;width:59.93px;top:239.21px">9</div>
<div class="c" style="left:303.36px;width:59.93px;top:239.21px">10</div>
<div class="c" style="left:363.28999999999996px;width:59.93px;top:239.21px">13</div>
<div class="c" style="left:423.22px;width:59.93px;top:239.21px">14</div>
<div class="c" style="left:483.15px;width:59.93px;top:239.21px">15</div>
<div class="c" style="left:543.0799999999999px;width:59.93px;top:239.21px">9</div>
<div class="c" style="left:603.01px;width:59.93px;top:239.21px">13</div>
<div class="c" style="left:662.94px;width:59.93px;top:239.21px">12</div>
<div class="c" style="left:722.87px;width:59.93px;top:239.21px">19</div>
<div class="c" style="left:782.8px;width:59.93px;top:239.21px">12</div>
<div class="c" style="left:842.73px;width:59.93px;top:239.21px">24</div>
<div class="c" style="left:902.66px;width:59.93px;top:239.21px">14</div>
<div class="l" style="left:964.59px;top:239.21px">750</div>
<div class="l" style="left:35px;top:251.70px">Subscribers Added - Weekend Starter</div>
<div class="c" style="left:183.5px;width:59.93px;top:251.70px">5</div>
<div class="c" style="left:243.43px;width:59.93px;top:251.70px">17</div>
<div class="c" style="left:303.36px;width:59.93px;top:251.70px">14</div>
<div class="c" style="left:363.28999999999996px;width:59.93px;top:251.70px">13</div>
<div class="c" style="left:423.22px;width:59.93px;top:251.70px">23</div>
<div class="c" style="left:483.15px;width:59.93px;top:251.70px">19</div>
<div class="c" style="left:543.0799999999999px;width:59.93px;top:251.70px">12</div>
<div class="c" style="left:603.01px;width:59.93px;top:251.70px">36</div>
<div class="c" style="left:662.94px;width:59.93px;top:251.70px">21</div>
<div class="c" style="left:722.87px;width:59.93px;top:251.70px">37</div>
<div class="c" style="left:782.8px;width:59.93px;top:251.70px">26</div>
<div class="c" style="left:842.73px;width:59.93px;top:251.70px">46</div>
<div class="c" style="left:902.66px;width:59.93px;top:251.70px">22</div>
<div class="l" style="left:964.59px;top:251.70px">170</div>
<div class="l" style="left:35px;top:264.19px">Subscribers Added - Standard Weekly</div>
<div class="c" style="left:183.5px;width:59.93px;top:264.19px">7</div>
<div class="c" style="left:243.43px;width:59.93px;top:264.19px">14</div>
<div class="c" style="left:303.36px;width:59.93px;top:264.19px">16</div>
<div class="c" style="left:363.28999999999996px;width:59.93px;top:264.19px">21</div>
<div class="c" style="left:423.22px;width:59.93px;top:264.19px">57</div>
<div class="c" style="left:483.15px;width:59.93px;top:264.19px">35</div>
<div class="c" style="left:543.0799999999999px;width:59.93px;top:264.19px">21</div>
<div class="c" style="left:603.01px;width:59.93px;top:264.19px">29</div>
<div class="c" style="left:662.94px;width:59.93px;top:264.19px">28</div>
<div class="c" style="left:722.87px;width:59.93px;top:264.19px">43</div>
<div class="c" style="left:782.8px;width:59.93px;top:264.19px">27</div>
<div class="c" style="left:842.73px;width:59.93px;top:264.19px">63</div>
<div class="c" style="left:902.66px;width:59.93px;top:264.19px">30</div>
<div class="l" style="left:964.59px;top:264.19px">450</div>
<div class="l" style="left:35px;top:276.68px">Subscribers Added - Full Access Plus</div>
<div class="c" style="left:183.5px;width:59.93px;top:276.68px">3</div>
<div class="c" style="left:243.43px;width:59.93px;top:276.68px">15</div>
<div class="c" style="left:303.36px;width:59.93px;top:276.68px">29</div>
<div class="c" style="left:363.28999999999996px;width:59.93px;top:276.68px">44</div>
<div class="c" style="left:423.22px;width:59.93px;top:276.68px">36</div>
<div class="c" style="left:483.15px;width:59.93px;top:276.68px">38</div>
<div class="c" style="left:543.0799999999999px;width:59.93px;top:276.68px">35</div>
<div class="c" style="left:603.01px;width:59.93px;top:276.68px">20</div>
<div class="c" style="left:662.94px;width:59.93px;top:276.68px">28</div>
<div class="c" style="left:722.87px;width:59.93px;top:276.68px">63</div>
<div class="c" style="left:782.8px;width:59.93px;top:276.68px">32</div>
<div class="c" style="left:842.73px;width:59.93px;top:276.68px">-46</div>
<div class="c" style="left:902.66px;width:59.93px;top:276.68px">25</div>
<div class="l" style="left:964.59px;top:276.68px">450</div>
<div class="l" style="left:35px;top:289.17px">Subscribers Added - Coaching Plus</div>
<div class="c" style="left:183.5px;width:59.93px;top:289.17px">3</div>
<div class="c" style="left:243.43px;width:59.93px;top:289.17px">15</div>
<div class="c" style="left:303.36px;width:59.93px;top:289.17px">29</div>
<div class="c" style="left:363.28999999999996px;width:59.93px;top:289.17px">44</div>
<div class="c" style="left:423.22px;width:59.93px;top:289.17px">36</div>
<div class="c" style="left:483.15px;width:59.93px;top:289.17px">38</div>
<div class="c" style="left:543.0799999999999px;width:59.93px;top:289.17px">35</div>
<div class="c" style="left:603.01px;width:59.93px;top:289.17px">20</div>
<div class="c" style="left:662.94px;width:59.93px;top:289.17px">28</div>
<div class="c" style="left:722.87px;width:59.93px;top:289.17px">63</div>
<div class="c" style="left:782.8px;width:59.93px;top:289.17px">32</div>
<div class="c" style="left:842.73px;width:59.93px;top:289.17px">-46</div>
<div class="c" style="left:902.66px;width:59.93px;top:289.17px">25</div>
<div class="l" style="left:964.59px;top:289.17px">450</div>
<div class="l" style="left:35px;top:301.66px">Subscribers Added - VIP Club</div>
<div class="c" style="left:183.5px;width:59.93px;top:301.66px">3</div>
<div class="c" style="left:243.43px;width:59.93px;top:301.66px">15</div>
<div class="c" style="left:303.36px;width:59.93px;top:301.66px">29</div>
<div class="c" style="left:363.28999999999996px;width:59.93px;top:301.66px">44</div>
<div class="c" style="left:423.22px;width:59.93px;top:301.66px">36</div>
<div class="c" style="left:483.15px;width:59.93px;top:301.66px">38</div>
<div class="c" style="left:543.0799999999999px;width:59.93px;top:301.66px">35</div>
<div class="c" style="left:603.01px;width:59.93px;top:301.66px">20</div>
<div class="c" style="left:662.94px;width:59.93px;top:301.66px">28</div>
<div class="c" style="left:722.87px;width:59.93px;top:301.66px">63</div>
<div class="c" style="left:782.8px;width:59.93px;top:301.66px">32</div>
<div class="c" style="left:842.73px;width:59.93px;top:301.66px">-46</div>
<div class="c" style="left:902.66px;width:59.93px;top:301.66px">25</div>
<div class="l" style="left:964.59px;top:301.66px">450</div>
<div class="l" style="left:35px;top:314.15px">Total Subscribers Added:</div>
<div class="c" style="left:183.5px;width:59.93px;top:314.15px">39</div>
<div class="c" style="left:243.43px;width:59.93px;top:314.15px">85</div>
<div class="c" style="left:303.36px;width:59.93px;top:314.15px">127</div>
<div class="c" style="left:363.28999999999996px;width:59.93px;top:314.15px">179</div>
<div class="c" style="left:423.22px;width:59.93px;top:314.15px">202</div>
<div class="c" style="left:483.15px;width:59.93px;top:314.15px">183</div>
<div class="c" style="left:543.0799999999999px;width:59.93px;top:314.15px">147</div>
<div class="c" style="left:603.01px;width:59.93px;top:314.15px">138</div>
<div class="c" style="left:662.94px;width:59.93px;top:314.15px">145</div>
<div class="c" style="left:722.87px;width:59.93px;top:314.15px">288</div>
<div class="c" style="left:782.8px;width:59.93px;top:314.15px">161</div>
<div class="c" style="left:842.73px;width:59.93px;top:314.15px">-5</div>
<div class="c" style="left:902.66px;width:59.93px;top:314.15px">141</div>
<div class="l" style="left:35px;top:339.13px">Churn - Weekly Starter</div>
<div class="c" style="left:183.5px;width:59.93px;top:339.13px">-5</div>
<div class="c" style="left:243.43px;width:59.93px;top:339.13px">-5</div>
<div class="c" style="left:303.36px;width:59.93px;top:339.13px">-5</div>
<div class="c" style="left:363.28999999999996px;width:59.93px;top:339.13px">-8</div>
<div class="c" style="left:423.22px;width:59.93px;top:339.13px">-4</div>
<div class="c" style="left:483.15px;width:59.93px;top:339.13px">-7</div>
<div class="c" style="left:543.0799999999999px;width:59.93px;top:339.13px">-5</div>
<div class="c" style="left:603.01px;width:59.93px;top:339.13px">-5</div>
<div class="c" style="left:662.94px;width:59.93px;top:339.13px">-4</div>
<div class="c" style="left:722.87px;width:59.93px;top:339.13px">-5</div>
<div class="c" style="left:782.8px;width:59.93px;top:339.13px">-5</div>
<div class="c" style="left:842.73px;width:59.93px;top:339.13px">-5</div>
<div class="c" style="left:902.66px;width:59.93px;top:339.13px">-5</div>
<div class="l" style="left:35px;top:351.62px">Churn - Weekend Starter</div>
<div class="c" style="left:183.5px;width:59.93px;top:351.62px">-5</div>
<div class="c" style="left:243.43px;width:59.93px;top:351.62px">-10</div>
<div class="c" style="left:303.36px;width:59.93px;top:351.62px">-4</div>
<div class="c" style="left:363.28999999999996px;width:59.93px;top:351.62px">-4</div>
<div class="c" style="left:423.22px;width:59.93px;top:351.62px">-4</div>
<div class="c" style="left:483.15px;width:59.93px;top:351.62px">-4</div>
<div class="c" style="left:543.0799999999999px;width:59.93px;top:351.62px">-4</div>
<div class="c" style="left:603.01px;width:59.93px;top:351.62px">-21</div>
<div class="c" style="left:662.94px;width:59.93px;top:351.62px">-7</div>
<div class="c" style="left:722.87px;width:59.93px;top:351.62px">-10</div>
<div class="c" style="left:782.8px;width:59.93px;top:351.62px">-9</div>
<div class="c" style="left:842.73px;width:59.93px;top:351.62px">-15</div>
<div class="c" style="left:902.66px;width:59.93px;top:351.62px">-8</div>
<div class="l" style="left:35px;top:364.11px">Churn - Standard Weekly</div>
<div class="c" style="left:183.5px;width:59.93px;top:364.11px">-3</div>
<div class="c" style="left:243.43px;width:59.93px;top:364.11px">-5</div>
<div class="c" style="left:303.36px;width:59.93px;top:364.11px">-4</div>
<div class="c" style="left:363.28999999999996px;width:59.93px;top:364.11px">-10</div>
<div class="c" style="left:423.22px;width:59.93px;top:364.11px">-34</div>
<div class="c" style="left:483.15px;width:59.93px;top:364.11px">-16</div>
<div class="c" style="left:543.0799999999999px;width:59.93px;top:364.11px">-11</div>
<div class="c" style="left:603.01px;width:59.93px;top:364.11px">-12</div>
<div class="c" style="left:662.94px;width:59.93px;top:364.11px">-9</div>
<div class="c" style="left:722.87px;width:59.93px;top:364.11px">-11</div>
<div class="c" style="left:782.8px;width:59.93px;top:364.11px">-12</div>
<div class="c" style="left:842.73px;width:59.93px;top:364.11px">-19</div>
<div class="c" style="left:902.66px;width:59.93px;top:364.11px">-12</div>
<div class="l" style="left:35px;top:376.60px">Churn - Full Access Plus</div>
<div class="c" style="left:183.5px;width:59.93px;top:376.60px">-4</div>
<div class="c" style="left:243.43px;width:59.93px;top:376.60px">-7</div>
<div class="c" style="left:303.36px;width:59.93px;top:376.60px">-19</div>
<div class="c" style="left:363.28999999999996px;width:59.93px;top:376.60px">-35</div>
<div class="c" style="left:423.22px;width:59.93px;top:376.60px">-15</div>
<div class="c" style="left:483.15px;width:59.93px;top:376.60px">-22</div>
<div class="c" style="left:543.0799999999999px;width:59.93px;top:376.60px">-26</div>
<div class="c" style="left:603.01px;width:59.93px;top:376.60px">-5</div>
<div class="c" style="left:662.94px;width:59.93px;top:376.60px">-12</div>
<div class="c" style="left:722.87px;width:59.93px;top:376.60px">-34</div>
<div class="c" style="left:782.8px;width:59.93px;top:376.60px">-19</div>
<div class="c" style="left:842.73px;width:59.93px;top:376.60px">-16</div>
<div class="c" style="left:902.66px;width:59.93px;top:376.60px">-18</div>
<div class="l" style="left:35px;top:389.09px">Churn - Coaching Plus</div>
<div class="c" style="left:183.5px;width:59.93px;top:389.09px">-4</div>
<div class="c" style="left:243.43px;width:59.93px;top:389.09px">-7</div>
<div class="c" style="left:303.36px;width:59.93px;top:389.09px">-19</div>
<div class="c" style="left:363.28999999999996px;width:59.93px;top:389.09px">-35</div>
<div class="c" style="left:423.22px;width:59.93px;top:389.09px">-15</div>
<div class="c" style="left:483.15px;width:59.93px;top:389.09px">-22</div>
<div class="c" style="left:543.0799999999999px;width:59.93px;top:389.09px">-26</div>
<div class="c" style="left:603.01px;width:59.93px;top:389.09px">-5</div>
<div class="c" style="left:662.94px;width:59.93px;top:389.09px">-12</div>
<div class="c" style="left:722.87px;width:59.93px;top:389.09px">-34</div>
<div class="c" style="left:782.8px;width:59.93px;top:389.09px">-19</div>
<div class="c" style="left:842.73px;width:59.93px;top:389.09px">-16</div>
<div class="c" style="left:902.66px;width:59.93px;top:389.09px">-18</div>
<div class="l" style="left:35px;top:401.58px">Churn - VIP Club</div>
<div class="c" style="left:183.5px;width:59.93px;top:401.58px">-4</div>
<div class="c" style="left:243.43px;width:59.93px;top:401.58px">-7</div>
<div class="c" style="left:303.36px;width:59.93px;top:401.58px">-19</div>
<div class="c" style="left:363.28999999999996px;width:59.93px;top:401.58px">-35</div>
<div class="c" style="left:423.22px;width:59.93px;top:401.58px">-15</div>
<div class="c" style="left:483.15px;width:59.93px;top:401.58px">-22</div>
<div class="c" style="left:543.0799999999999px;width:59.93px;top:401.58px">-26</div>
<div class="c" style="left:603.01px;width:59.93px;top:401.58px">-5</div>
<div class="c" style="left:662.94px;width:59.93px;top:401.58px">-12</div>
<div class="c" style="left:722.87px;width:59.93px;top:401.58px">-34</div>
<div class="c" style="left:782.8px;width:59.93px;top:401.58px">-19</div>
<div class="c" style="left:842.73px;width:59.93px;top:401.58px">-16</div>
<div class="c" style="left:902.66px;width:59.93px;top:401.58px">-18</div>
<div class="l" style="left:35px;top:414.07px">Total Subscriber Churn:</div>
<div class="c" style="left:183.5px;width:59.93px;top:414.07px">-25</div>
<div class="c" style="left:243.43px;width:59.93px;top:414.07px">-41</div>
<div class="c" style="left:303.36px;width:59.93px;top:414.07px">-70</div>
<div class="c" style="left:363.28999999999996px;width:59.93px;top:414.07px">-127</div>
<div class="c" style="left:423.22px;width:59.93px;top:414.07px">-87</div>
<div class="c" style="left:483.15px;width:59.93px;top:414.07px">-93</div>
<div class="c" style="left:543.0799999999999px;width:59.93px;top:414.07px">-98</div>
<div class="c" style="left:603.01px;width:59.93px;top:414.07px">-53</div>
<div class="c" style="left:662.94px;width:59.93px;top:414.07px">-56</div>
<div class="c" style="left:722.87px;width:59.93px;top:414.07px">-128</div>
<div class="c" style="left:782.8px;width:59.93px;top:414.07px">-83</div>
<div class="c" style="left:842.73px;width:59.93px;top:414.07px">-87</div>
<div class="c" style="left:902.66px;width:59.93px;top:414.07px">-79</div>
<div class="l" style="left:35px;top:439.05px">Churn Rate - Weekly Starter</div>
<div class="c" style="left:183.5px;width:59.93px;top:439.05px">-2.53%</div>
<div class="c" style="left:243.43px;width:59.93px;top:439.05px">-2.48%</div>
<div class="c" style="left:303.36px;width:59.93px;top:439.05px">-2.42%</div>
<div class="c" style="left:363.28999999999996px;width:59.93px;top:439.05px">-3.77%</div>
<div class="c" style="left:423.22px;width:59.93px;top:439.05px">-1.80%</div>
<div class="c" style="left:483.15px;width:59.93px;top:439.05px">-3.04%</div>
<div class="c" style="left:543.0799999999999px;width:59.93px;top:439.05px">-2.14%</div>
<div class="c" style="left:603.01px;width:59.93px;top:439.05px">-2.07%</div>
<div class="c" style="left:662.94px;width:59.93px;top:439.05px">-1.60%</div>
<div class="c" style="left:722.87px;width:59.93px;top:439.05px">-1.89%</div>
<div class="c" style="left:782.8px;width:59.93px;top:439.05px">-1.85%</div>
<div class="c" style="left:842.73px;width:59.93px;top:439.05px">-1.72%</div>
<div class="c" style="left:902.66px;width:59.93px;top:439.05px">-2.28%</div>
<div class="l" style="left:964.59px;top:439.05px">1.00%</div>
<div class="l" style="left:35px;top:451.54px">Churn Rate - Weekend Starter</div>
<div class="c" style="left:183.5px;width:59.93px;top:451.54px">-1.36%</div>
<div class="c" style="left:243.43px;width:59.93px;top:451.54px">-2.67%</div>
<div class="c" style="left:303.36px;width:59.93px;top:451.54px">-1.04%</div>
<div class="c" style="left:363.28999999999996px;width:59.93px;top:451.54px">-1.02%</div>
<div class="c" style="left:423.22px;width:59.93px;top:451.54px">-0.97%</div>
<div class="c" style="left:483.15px;width:59.93px;top:451.54px">-0.94%</div>
<div class="c" style="left:543.0799999999999px;width:59.93px;top:451.54px">-0.92%</div>
<div class="c" style="left:603.01px;width:59.93px;top:451.54px">-4.67%</div>
<div class="c" style="left:662.94px;width:59.93px;top:451.54px">-1.51%</div>
<div class="c" style="left:722.87px;width:59.93px;top:451.54px">-2.04%</div>
<div class="c" style="left:782.8px;width:59.93px;top:451.54px">-1.77%</div>
<div class="c" style="left:842.73px;width:59.93px;top:451.54px">-2.78%</div>
<div class="c" style="left:902.66px;width:59.93px;top:451.54px">-1.81%</div>
<div class="l" style="left:964.59px;top:451.54px">1.00%</div>
<div class="l" style="left:35px;top:464.03px">Churn Rate - Standard Weekly</div>
<div class="c" style="left:183.5px;width:59.93px;top:464.03px">-0.66%</div>
<div class="c" style="left:243.43px;width:59.93px;top:464.03px">-1.08%</div>
<div class="c" style="left:303.36px;width:59.93px;top:464.03px">-0.85%</div>
<div class="c" style="left:363.28999999999996px;width:59.93px;top:464.03px">-2.07%</div>
<div class="c" style="left:423.22px;width:59.93px;top:464.03px">-6.71%</div>
<div class="c" style="left:483.15px;width:59.93px;top:464.03px">-3.04%</div>
<div class="c" style="left:543.0799999999999px;width:59.93px;top:464.03px">-2.05%</div>
<div class="c" style="left:603.01px;width:59.93px;top:464.03px">-2.17%</div>
<div class="c" style="left:662.94px;width:59.93px;top:464.03px">-1.57%</div>
<div class="c" style="left:722.87px;width:59.93px;top:464.03px">-1.82%</div>
<div class="c" style="left:782.8px;width:59.93px;top:464.03px">-1.94%</div>
<div class="c" style="left:842.73px;width:59.93px;top:464.03px">-2.87%</div>
<div class="c" style="left:902.66px;width:59.93px;top:464.03px">-2.24%</div>
<div class="l" style="left:964.59px;top:464.03px">1.00%</div>
<div class="l" style="left:35px;top:476.52px">Churn Rate - Full Access Plus</div>
<div class="c" style="left:183.5px;width:59.93px;top:476.52px">-1.01%</div>
<div class="c" style="left:243.43px;width:59.93px;top:476.52px">-1.73%</div>
<div class="c" style="left:303.36px;width:59.93px;top:476.52px">-4.59%</div>
<div class="c" style="left:363.28999999999996px;width:59.93px;top:476.52px">-8.27%</div>
<div class="c" style="left:423.22px;width:59.93px;top:476.52px">-3.38%</div>
<div class="c" style="left:483.15px;width:59.93px;top:476.52px">-4.78%</div>
<div class="c" style="left:543.0799999999999px;width:59.93px;top:476.52px">-5.54%</div>
<div class="c" style="left:603.01px;width:59.93px;top:476.52px">-1.03%</div>
<div class="c" style="left:662.94px;width:59.93px;top:476.52px">-2.40%</div>
<div class="c" style="left:722.87px;width:59.93px;top:476.52px">-6.43%</div>
<div class="c" style="left:782.8px;width:59.93px;top:476.52px">-3.51%</div>
<div class="c" style="left:842.73px;width:59.93px;top:476.52px">-3.33%</div>
<div class="c" style="left:902.66px;width:59.93px;top:476.52px">-3.83%</div>
<div class="l" style="left:964.59px;top:476.52px">1.00%</div>
<div class="l" style="left:35px;top:489.01px">Churn Rate - Coaching Plus</div>
<div class="c" style="left:183.5px;width:59.93px;top:489.01px">-1.01%</div>
<div class="c" style="left:243.43px;width:59.93px;top:489.01px">-1.73%</div>
<div class="c" style="left:303.36px;width:59.93px;top:489.01px">-4.59%</div>
<div class="c" style="left:363.28999999999996px;width:59.93px;top:489.01px">-8.27%</div>
<div class="c" style="left:423.22px;width:59.93px;top:489.01px">-3.38%</div>
<div class="c" style="left:483.15px;width:59.93px;top:489.01px">-4.78%</div>
<div class="c" style="left:543.0799999999999px;width:59.93px;top:489.01px">-5.54%</div>
<div class="c" style="left:603.01px;width:59.93px;top:489.01px">-1.03%</div>
<div class="c" style="left:662.94px;width:59.93px;top:489.01px">-2.40%</div>
<div class="c" style="left:722.87px;width:59.93px;top:489.01px">-6.43%</div>
<div class="c" style="left:782.8px;width:59.93px;top:489.01px">-3.51%</div>
<div class="c" style="left:842.73px;width:59.93px;top:489.01px">-3.33%</div>
<div class="c" style="left:902.66px;width:59.93px;top:489.01px">-3.83%</div>
<div class="l" style="left:964.59px;top:489.01px">1.00%</div>
</div>
<div class="a" style="left:987.5px;top:63.6px;width:12.5px;height:495.4px;background:#fcfcfc"></div>
<svg class="a" style="left:991.6px;top:54.4px" width="5" height="4" viewBox="0 0 5 4"><path d="M0 4h5L2.5 0z" fill="#666"/></svg>
<div class="a" style="left:990.8px;top:62.7px;width:6px;height:364.5px;background:#7a7a7a;border-radius:3px"></div>
<svg class="a" style="left:991.6px;top:552px" width="5" height="4" viewBox="0 0 5 4"><path d="M0 0h5L2.5 4z" fill="#666"/></svg>
<div class="a" style="left:0;top:559px;width:1000px;height:17.5px;background:#e7e9ed"></div>
<div class="a" style="left:0;top:576.5px;width:1000px;height:15.5px;background:#f6f6f6;border-top:1px solid #e2e2e2"></div>
<svg class="a" style="left:17px;top:564px" width="5" height="8" viewBox="0 0 5 8"><path d="M4.2 0.5L0.8 4l3.4 3.5" fill="none" stroke="#b5b5b5" stroke-width="1"/></svg>
<svg class="a" style="left:36.5px;top:564px" width="5" height="8" viewBox="0 0 5 8"><path d="M0.8 0.5L4.2 4 0.8 7.5" fill="none" stroke="#555" stroke-width="1"/></svg>
<div class="t" style="left:79px;top:565.5px;font-size:9.2px;color:#333;transform:scaleX(1.017);transform-origin:0 0">How To</div>
<div class="a" style="left:121px;top:560.5px;width:71.5px;height:16.5px;background:#fdf59a"></div>
<div class="t" style="left:127.5px;top:565.5px;font-size:9.2px;color:#333;transform:scaleX(0.987);transform-origin:0 0">2025 Accounts</div>
<div class="a" style="left:197px;top:559px;width:104px;height:18px;background:#ffffff"></div>
<div class="a" style="left:203px;top:574.5px;width:91px;height:1.3px;background:#217346"></div>
<div class="t" style="left:203.75px;top:564.5px;font-size:8.8px;color:#1b1b1b;font-weight:bold;transform:scaleX(0.995);transform-origin:0 0">2025 MRR Dashboard</div>
<div class="a" style="left:304px;top:560.5px;width:44px;height:16.5px;background:#fdf59a"></div>
<div class="t" style="left:310px;top:565.5px;font-size:9.2px;color:#333;transform:scaleX(0.947);transform-origin:0 0">IS 2025</div>
<div class="a" style="left:350px;top:560.5px;width:47px;height:16.5px;background:#fdf59a"></div>
<div class="t" style="left:356.25px;top:565.5px;font-size:9.2px;color:#333;transform:scaleX(0.922);transform-origin:0 0">CF 2025</div>
<div class="t" style="left:406.25px;top:565.5px;font-size:9.2px;color:#333;transform:scaleX(0.851);transform-origin:0 0">BS 2025</div>
<div class="a" style="left:449px;top:560.5px;width:61px;height:16.5px;background:#fdf59a"></div>
<div class="t" style="left:455px;top:565.5px;font-size:9.2px;color:#333;transform:scaleX(0.914);transform-origin:0 0">CAPEX 2025</div>
<div class="a" style="left:515px;top:560.5px;width:58px;height:16.5px;background:#fdf59a"></div>
<div class="t" style="left:521.25px;top:565.5px;font-size:9.2px;color:#333;transform:scaleX(0.927);transform-origin:0 0">OPEX 2025</div>
<div class="t" style="left:583.75px;top:565.5px;font-size:9.2px;color:#333;transform:scaleX(0.970);transform-origin:0 0">Statements Summary 2025</div>
<div class="t" style="left:710.4px;top:565.5px;font-size:9.2px;color:#333;transform:scaleX(0.946);transform-origin:0 0">PAYG 2025 Charts</div>
<div class="a" style="left:795px;top:560.5px;width:70.5px;height:16.5px;background:#fdf59a"></div>
<div class="t" style="left:801.6px;top:565.5px;font-size:9.2px;color:#333;transform:scaleX(0.982);transform-origin:0 0">2026 Accounts</div>
<div class="t" style="left:877.5px;top:566px;font-size:8px;color:#7a8ab0">&#8249;</div>
<div class="a" style="left:887px;top:568px;width:6px;height:1px;background:#444"></div>
<div class="a" style="left:906.5px;top:568px;width:7px;height:1px;background:#444"></div>
<div class="a" style="left:909.5px;top:565px;width:1px;height:7px;background:#444"></div>
<div class="a" style="left:931.5px;top:565px;width:1.2px;height:1.2px;background:#444"></div>
<div class="a" style="left:931.5px;top:568px;width:1.2px;height:1.2px;background:#444"></div>
<div class="a" style="left:931.5px;top:571px;width:1.2px;height:1.2px;background:#444"></div>
<svg class="a" style="left:945px;top:565px" width="4" height="6" viewBox="0 0 4 6"><path d="M4 0v6L0 3z" fill="#555"/></svg>
<div class="a" style="left:953.8px;top:565.6px;width:20.2px;height:6.3px;background:#7a7a7a;border-radius:3px"></div>
<svg class="a" style="left:980.5px;top:565px" width="4" height="6" viewBox="0 0 4 6"><path d="M0 0v6l4-3z" fill="#555"/></svg>
<div class="t" style="left:8px;top:584.3px;font-size:6.4px;color:#555">Ready</div>
<svg class="a" style="left:40px;top:580.5px" width="9" height="9" viewBox="0 0 9 9"><rect x="0.5" y="0.5" width="8" height="8" fill="none" stroke="#666" stroke-width="0.9"/><rect x="0.5" y="0.5" width="8" height="2" fill="#666"/><circle cx="5.5" cy="5.8" r="1.8" fill="none" stroke="#555" stroke-width="0.9"/></svg>
<svg class="a" style="left:60px;top:580px" width="10" height="10" viewBox="0 0 10 10"><path d="M1 2h8M5 0.8v1.2M2 2l-1 4h2zM8 2l-1 4h2zM5 2v7M3 9h4" fill="none" stroke="#555" stroke-width="0.8"/></svg>
<div class="t" style="left:72px;top:584.2px;font-size:6.65px;color:#333;font-weight:bold">Accessibility: Investigate</div>
<svg class="a" style="left:814px;top:581.5px" width="9" height="9" viewBox="0 0 9 9"><path d="M0.5 0.5h8v8h-8zM0.5 3.2h8M0.5 5.9h8M3.2 0.5v8M5.9 0.5v8" fill="none" stroke="#555" stroke-width="0.8"/></svg>
<svg class="a" style="left:841px;top:581.5px" width="9" height="9" viewBox="0 0 9 9"><path d="M0.5 0.5h8v8h-8zM2 2.2h5M2 4h5M2 5.8h5M2 7.4h5" fill="none" stroke="#555" stroke-width="0.8"/></svg>
<svg class="a" style="left:867px;top:581.5px" width="9" height="9" viewBox="0 0 9 9"><path d="M0.5 0.5h8v8h-8zM0.5 4.5h8M4.5 0.5v4" fill="none" stroke="#555" stroke-width="0.8"/></svg>
<div class="a" style="left:888px;top:586.5px;width:4px;height:0.8px;background:#555"></div>
<div class="a" style="left:895.7px;top:586.5px;width:65px;height:0.8px;background:#888"></div>
<div class="a" style="left:928.5px;top:583px;width:2px;height:7px;background:#444"></div>
<div class="a" style="left:964px;top:586.5px;width:5px;height:0.8px;background:#555"></div>
<div class="a" style="left:966px;top:584.5px;width:0.8px;height:5px;background:#555"></div>
<div class="t" style="left:978.5px;top:584.5px;font-size:6.4px;color:#444">100%</div>
</body></html>
